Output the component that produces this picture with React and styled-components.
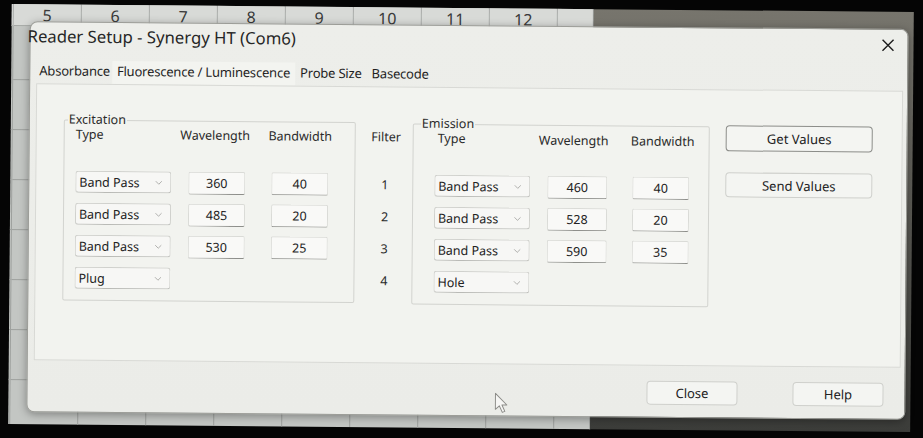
import React from "react";
import styled, { createGlobalStyle } from "styled-components";
import { ChevronDown } from "lucide-react";

const GlobalStyle = createGlobalStyle`
  html, body {
    margin: 0;
    padding: 0;
    background: #000;
  }
  * {
    box-sizing: border-box;
  }
`;

const Screen = styled.div`
  width: 923px;
  height: 438px;
  background: #050505;
  padding: 8px 11px 10px 10px;
  overflow: hidden;
  font-family: "Noto Sans", "Open Sans", sans-serif;
`;

const Desktop = styled.div`
  position: relative;
  width: 902px;
  height: 420px;
  display: flex;
  transform: rotate(0.5deg);
`;

const Sheet = styled.div`
  width: 582px;
  display: flex;
  background: #c3c6c3;
`;

const SheetColumn = styled.div`
  width: ${(p) => p.$w}px;
  display: flex;
  flex-direction: column;
  border-right: 1px solid #9da09d;
`;

const SheetHead = styled.div`
  height: 22px;
  display: flex;
  align-items: center;
  justify-content: center;
  background: #d8dad7;
  border-bottom: 1px solid #a5a8a5;
  font-size: 16px;
  color: #3a3a3a;
`;

const SheetBody = styled.div`
  flex: 1;
  background: repeating-linear-gradient(
    180deg,
    transparent 0,
    transparent 49px,
    #9da09d 49px,
    #9da09d 50px
  );
  background-position: 0 4px;
`;

const Backdrop = styled.div`
  flex: 1;
  background: linear-gradient(180deg, #77756d 0%, #5c5b55 45%, #3c3d3a 100%);
`;

const Dialog = styled.div`
  position: absolute;
  left: 18px;
  top: 17px;
  width: 879px;
  height: 391px;
  display: flex;
  flex-direction: column;
  background: linear-gradient(180deg, #edeeea 0%, #ebece8 100%);
  border: 1px solid #9c9d98;
  border-radius: 8px;
  box-shadow: 0 2px 8px rgba(0, 0, 0, 0.35);
  color: #2a2a2a;
`;

const TitleBar = styled.div`
  height: 27px;
  display: flex;
  align-items: center;
  justify-content: space-between;
  padding: 0 13px 0 0;
`;

const Title = styled.div`
  margin-left: -3px;
  font-size: 16.7px;
  color: #262626;
`;

const CloseIcon = styled.svg`
  width: 13px;
  height: 13px;
  margin-top: 4px;
`;

const Tabs = styled.div`
  display: flex;
  margin: 11px 0 0 4px;
  height: 23px;
`;

const Tab = styled.div`
  padding: 0 5px;
  margin-right: ${(p) => p.$gap || 0}px;
  font-size: 13px;
  letter-spacing: -0.2px;
  line-height: 21px;
  color: #1f1f1f;
  background: ${(p) => (p.$active ? "#f3f4f0" : "transparent")};
`;

const Panel = styled.div`
  height: 277px;
  margin: 0 4px 0 6px;
  background: #f2f3ef;
  border: 1px solid #d8d9d5;
  display: flex;
  align-items: flex-start;
  padding: 29px 0 0 27px;
`;

const Group = styled.fieldset`
  width: ${(p) => p.$w}px;
  height: ${(p) => p.$h}px;
  margin: ${(p) => p.$top || 0}px 0 0 0;
  padding: 0 0 0 ${(p) => p.$pad}px;
  border: 1px solid #d2d3cf;
  border-radius: 2px;
  min-width: 0;
`;

const Legend = styled.legend`
  font-size: 12.5px;
  line-height: 12px;
  padding: 0 1px;
  margin-left: ${(p) => p.$offset}px;
  color: #2a2a2a;
`;

const HeadRow = styled.div`
  display: flex;
  height: 16px;
  margin-top: 1px;
  margin-left: ${(p) => p.$shift || 0}px;
  font-size: 12.5px;
  line-height: 16px;
  color: #2a2a2a;
`;

const HeadCell = styled.div`
  width: ${(p) => p.$w}px;
  margin-right: ${(p) => p.$gap || 0}px;
  text-align: ${(p) => (p.$center ? "center" : "left")};
  white-space: nowrap;
  padding-top: ${(p) => p.$down || 0}px;
`;

const Rows = styled.div`
  display: flex;
  flex-direction: column;
  gap: 10px;
  margin-top: 28px;
`;

const Row = styled.div`
  display: flex;
  height: 22px;
`;

const Select = styled.div`
  width: 96px;
  height: 22px;
  margin-right: ${(p) => p.$gap}px;
  display: flex;
  align-items: center;
  justify-content: space-between;
  padding: 0 6px 0 3px;
  font-size: 12.5px;
  color: #222;
  background: #f7f7f5;
  border: 1px solid #d0d1cd;
  border-bottom-color: #b9bab6;
  border-radius: 3px;
`;

const Field = styled.input`
  width: ${(p) => p.$w}px;
  height: 23px;
  margin-right: ${(p) => p.$gap || 0}px;
  text-align: center;
  font-family: "Noto Sans", "Open Sans", sans-serif;
  font-size: 12.5px;
  color: #222;
  background: #f9f9f7;
  border: 1px solid #dadbd7;
  border-bottom: 1px solid #8e8f8b;
  border-radius: 2px;
  padding: 0;
  outline: none;
`;

const FilterCol = styled.div`
  width: 57px;
  display: flex;
  flex-direction: column;
  align-items: center;
  padding: 13px 0 0 2px;
  font-size: 12.5px;
  color: #2a2a2a;
`;

const FilterHead = styled.div`
  height: 16px;
  line-height: 16px;
  margin-left: 2px;
`;

const FilterNum = styled.div`
  height: 22px;
  line-height: 24px;
`;

const ButtonCol = styled.div`
  display: flex;
  flex-direction: column;
  margin: 6px 0 0 16px;
  gap: 21px;
`;

const Button = styled.button`
  width: ${(p) => p.$w}px;
  height: ${(p) => p.$h}px;
  font-family: "Noto Sans", "Open Sans", sans-serif;
  font-size: 13px;
  color: #222;
  background: #f4f5f2;
  border: 1px solid ${(p) => (p.$primary ? "#8c8d89" : "#cfd0cc")};
  border-radius: 4px;
  padding: 0;
`;

const Footer = styled.div`
  flex: 1;
  display: flex;
  justify-content: flex-end;
  align-items: flex-start;
  gap: 55px;
  padding: 15px 21px 0 0;
`;

const Cursor = styled.svg`
  position: absolute;
  left: 486px;
  top: 384px;
  width: 14px;
  height: 22px;
`;

const sheetCols = [
  { w: 2, label: "" },
  { w: 68, label: "5" },
  { w: 68, label: "6" },
  { w: 68, label: "7" },
  { w: 68, label: "8" },
  { w: 68, label: "9" },
  { w: 68, label: "10" },
  { w: 68, label: "11" },
  { w: 68, label: "12" },
  { w: 36, label: "" },
];

const excitation = [
  { type: "Band Pass", wl: "360", bw: "40" },
  { type: "Band Pass", wl: "485", bw: "20" },
  { type: "Band Pass", wl: "530", bw: "25" },
  { type: "Plug" },
];

const emission = [
  { type: "Band Pass", wl: "460", bw: "40" },
  { type: "Band Pass", wl: "528", bw: "20" },
  { type: "Band Pass", wl: "590", bw: "35" },
  { type: "Hole" },
];

function Dropdown({ value, gap }) {
  return (
    <Select $gap={gap}>
      <span>{value}</span>
      <ChevronDown size={11} strokeWidth={1.4} color="#8a8a86" />
    </Select>
  );
}

export default function App() {
  return (
    <>
      <GlobalStyle />
      <Screen>
        <Desktop>
          <Sheet>
            {sheetCols.map((c, i) => (
              <SheetColumn key={i} $w={c.w}>
                <SheetHead>{c.label}</SheetHead>
                <SheetBody />
              </SheetColumn>
            ))}
          </Sheet>
          <Backdrop />

          <Dialog>
            <TitleBar>
              <Title>Reader Setup - Synergy HT (Com6)</Title>
              <CloseIcon viewBox="0 0 13 13">
                <path d="M1 1 L12 12 M12 1 L1 12" stroke="#1e1e1e" strokeWidth="1.4" fill="none" />
              </CloseIcon>
            </TitleBar>

            <Tabs>
              <Tab $gap={-3}>Absorbance</Tab>
              <Tab $active>Fluorescence / Luminescence</Tab>
              <Tab>Probe Size</Tab>
              <Tab>Basecode</Tab>
            </Tabs>

            <Panel>
              <Group $w={292} $h={187} $pad={11}>
                <Legend $offset={-8}>Excitation</Legend>
                <HeadRow>
                  <HeadCell $w={96} $gap={7}>Type</HeadCell>
                  <HeadCell $w={73} $gap={16} $center>Wavelength</HeadCell>
                  <HeadCell $w={65} $center>Bandwidth</HeadCell>
                </HeadRow>
                <Rows>
                  {excitation.map((r, i) => (
                    <Row key={i}>
                      <Dropdown value={r.type} gap={17} />
                      {r.wl && <Field $w={57} $gap={26} readOnly value={r.wl} />}
                      {r.bw && <Field $w={57} readOnly value={r.bw} />}
                    </Row>
                  ))}
                </Rows>
              </Group>

              <FilterCol>
                <FilterHead>Filter</FilterHead>
                <Rows>
                  {[1, 2, 3, 4].map((n) => (
                    <FilterNum key={n}>{n}</FilterNum>
                  ))}
                </Rows>
              </FilterCol>

              <Group $w={297} $h={187} $pad={21} $top={1}>
                <Legend $offset={-14}>Emission</Legend>
                <HeadRow $shift={3}>
                  <HeadCell $w={96} $gap={4}>Type</HeadCell>
                  <HeadCell $w={72} $gap={20} $center $down={1}>Wavelength</HeadCell>
                  <HeadCell $w={66} $center $down={1}>Bandwidth</HeadCell>
                </HeadRow>
                <Rows>
                  {emission.map((r, i) => (
                    <Row key={i}>
                      <Dropdown value={r.type} gap={17} />
                      {r.wl && <Field $w={60} $gap={25} readOnly value={r.wl} />}
                      {r.bw && <Field $w={57} readOnly value={r.bw} />}
                    </Row>
                  ))}
                </Rows>
              </Group>

              <ButtonCol>
                <Button $w={147} $h={26} $primary>Get Values</Button>
                <Button $w={147} $h={25}>Send Values</Button>
              </ButtonCol>
            </Panel>

            <Footer>
              <Button $w={91} $h={24}>Close</Button>
              <Button $w={91} $h={24}>Help</Button>
            </Footer>
          </Dialog>

          <Cursor viewBox="0 0 14 22">
            <path
              d="M1 1 L1 17 L5 13.5 L8 20 L10.5 19 L7.6 12.6 L12.5 12.6 Z"
              fill="#f6f6f4"
              stroke="#8c8c88"
              strokeWidth="1"
              strokeLinejoin="round"
            />
          </Cursor>
        </Desktop>
      </Screen>
    </>
  );
}
